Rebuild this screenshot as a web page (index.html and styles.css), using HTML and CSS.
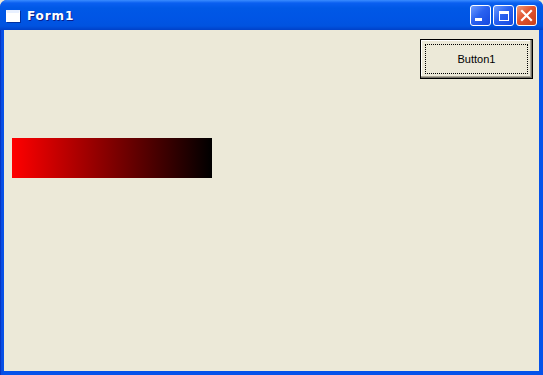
FILE: index.html
```html
<!DOCTYPE html>
<html>
<head>
<meta charset="utf-8">
<link rel="stylesheet" href="styles.css">
</head>
<body>
<div class="window">
  <div class="titlebar">
    <div class="title-left">
      <span class="app-icon"></span>
      <span class="title-text">Form1</span>
    </div>
    <div class="title-buttons">
      <span class="tbtn tbtn-min"><span class="min-glyph"></span></span>
      <span class="tbtn tbtn-max"><span class="max-glyph"></span></span>
      <span class="tbtn tbtn-close">
        <svg width="13" height="13" viewBox="0 0 13 13"><path d="M2 2 L11 11 M11 2 L2 11" stroke="#fff" stroke-width="2.2" stroke-linecap="square"/></svg>
      </span>
    </div>
  </div>
  <div class="frame">
    <div class="client">
      <div class="button-row">
        <div class="winbtn"><span class="winbtn-face">Button1</span></div>
      </div>
      <div class="gradient-bar"></div>
    </div>
  </div>
</div>
</body>
</html>
```
FILE: styles.css
```css
html, body {
  margin: 0;
  padding: 0;
  background: #ECE9D8;
}
.window {
  width: 543px;
  height: 375px;
  display: flex;
  flex-direction: column;
  box-sizing: border-box;
  overflow: hidden;
  border-radius: 7px 7px 0 0;
  background: #0842D4;
}
.titlebar {
  height: 30px;
  flex: 0 0 30px;
  display: flex;
  align-items: center;
  justify-content: space-between;
  background: linear-gradient(to bottom, #3A8CFF 0px, #0A5FF0 3px, #0058E6 8px, #0055E5 18px, #0053E0 26px, #0041C8 30px);
  box-sizing: border-box;
  padding: 0 6px 0 6px;
}
.title-left {
  display: flex;
  align-items: center;
  gap: 7px;
  margin-top: 1px;
}
.app-icon {
  width: 12px;
  height: 8px;
  background: #fff;
  border: 1px solid #fff;
  border-top: 3px solid #E8F0FF;
  box-shadow: 1px 1px 0 #0030A0;
}
.title-text {
  font-family: "DejaVu Sans", sans-serif;
  font-weight: bold;
  font-size: 12px;
  letter-spacing: 0.9px;
  color: #fff;
  text-shadow: 1px 1px 0 #0A1E8A;
}
.title-buttons {
  display: flex;
  gap: 2px;
  margin-top: 1px;
  margin-right: 0;
}
.tbtn {
  width: 19px;
  height: 19px;
  border: 1px solid #fff;
  border-radius: 3px;
  display: flex;
  align-items: center;
  justify-content: center;
  position: relative;
  background: linear-gradient(135deg, #6E9DFF 0%, #2A62F0 45%, #1448E0 100%);
}
.tbtn-close {
  background: linear-gradient(135deg, #F09A7A 0%, #E2532E 45%, #C8401C 100%);
}
.min-glyph {
  width: 7px;
  height: 3px;
  background: #fff;
  align-self: flex-end;
  margin: 0 4px 4px 0;
}
.max-glyph {
  width: 8px;
  height: 6px;
  border: 1px solid #fff;
  border-top: 3px solid #fff;
}
.frame {
  flex: 1;
  display: flex;
  padding: 0 4px 4px 4px;
  background: linear-gradient(to right, #0020A8 0px, #0A4BE0 1px, #0552EA 4px);
}
.client {
  flex: 1;
  background: #ECE9D8;
  padding: 9px 6px 0 8px;
  box-sizing: border-box;
}
.button-row {
  display: flex;
  justify-content: flex-end;
}
.winbtn {
  width: 113px;
  height: 40px;
  box-sizing: border-box;
  border: 1px solid #000;
  background: #ECE9D8;
  box-shadow: inset -1px -1px 0 #716F64, inset -2px -2px 0 #ACA899, inset 1px 1px 0 #fff;
  padding: 4px;
  display: flex;
}
.winbtn-face {
  flex: 1;
  border: 1px dotted #000;
  display: flex;
  align-items: center;
  justify-content: center;
  font-family: "Liberation Sans", Arial, sans-serif;
  font-size: 11px;
  color: #000;
}
.gradient-bar {
  width: 200px;
  height: 40px;
  margin-top: 59px;
  background: linear-gradient(to right, #FF0000, #000000);
}
```
